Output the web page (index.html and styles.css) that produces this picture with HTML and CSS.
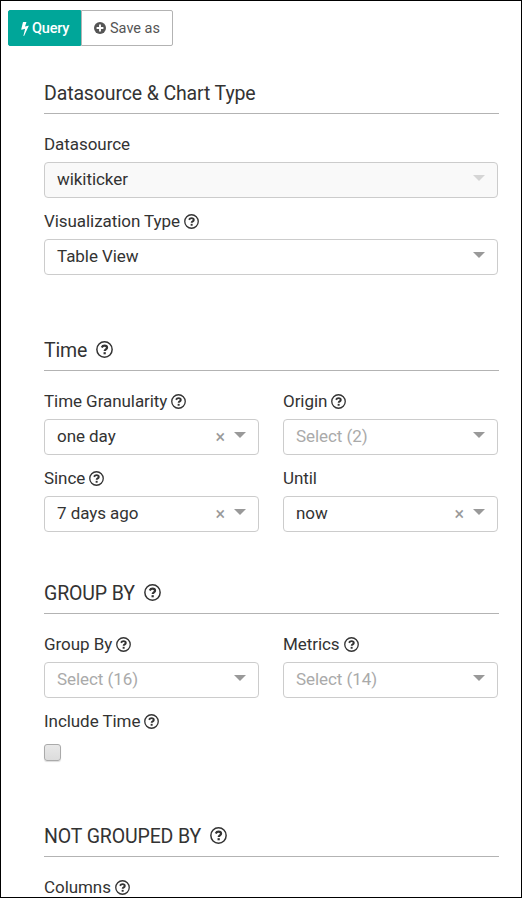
FILE: index.html
```
<!DOCTYPE html>
<html lang="en">
<head>
    <meta charset="UTF-8">
    <meta name="viewport" content="width=device-width, initial-scale=1.0">
    <title>Explore - wikiticker</title>
    <link rel="stylesheet" href="styles.css">
</head>
<body>
    <!-- Shared icon -->
    <svg class="defs" width="0" height="0">
        <symbol id="help" viewBox="0 0 16 16">
            <circle cx="8" cy="8" r="7.2" fill="none" stroke="currentColor" stroke-width="1.4"/>
            <path d="M5.4 6.1C6 4.9 6.9 4.4 8 4.4c1.4 0 2.4.7 2.4 1.9 0 1.6-2.2 1.5-2.2 3.1" fill="none" stroke="currentColor" stroke-width="2.1"/>
            <rect x="7.1" y="10.5" width="2.1" height="2" fill="currentColor"/>
        </symbol>
    </svg>

    <div class="panel">
        <div class="btn-group">
            <button class="btn btn-primary">
                <svg class="bolt" viewBox="448 0 896 1792"><path fill="currentColor" d="M1333 566q18 20 7 44l-540 1157q-13 25-42 25-4 0-14-2-17-5-25.5-19t-4.5-30l197-808-406 101q-4 1-12 1-18 0-31-11-18-15-13-39l201-825q4-14 16-23t28-9h328q19 0 32 12.5t13 29.5q0 8-5 18l-171 463 396-98q8-2 12-2 19 0 34 15z"/></svg>
                <span>Query</span>
            </button>
            <button class="btn btn-default">
                <svg class="plus" viewBox="0 0 12 12"><circle cx="6" cy="6" r="6" fill="currentColor"/><path d="M6 2.6v6.8M2.6 6h6.8" stroke="#fff" stroke-width="1.9"/></svg>
                <span>Save as</span>
            </button>
        </div>

        <section class="section section-source">
            <h2 class="legend">Datasource &amp; Chart Type</h2>
            <div class="field">
                <label class="label">Datasource</label>
                <div class="select disabled"><span class="value">wikiticker</span><i class="arrow"></i></div>
            </div>
            <div class="field">
                <label class="label">Visualization Type <svg class="help"><use href="#help"/></svg></label>
                <div class="select"><span class="value">Table View</span><i class="arrow"></i></div>
            </div>
        </section>

        <section class="section section-time">
            <h2 class="legend">Time <svg class="help"><use href="#help"/></svg></h2>
            <div class="row">
                <div class="field">
                    <label class="label">Time Granularity <svg class="help"><use href="#help"/></svg></label>
                    <div class="select"><span class="value">one day</span><span class="clear">×</span><i class="arrow"></i></div>
                </div>
                <div class="field">
                    <label class="label">Origin <svg class="help"><use href="#help"/></svg></label>
                    <div class="select"><span class="value placeholder">Select (2)</span><i class="arrow"></i></div>
                </div>
            </div>
            <div class="row">
                <div class="field">
                    <label class="label">Since <svg class="help"><use href="#help"/></svg></label>
                    <div class="select"><span class="value">7 days ago</span><span class="clear">×</span><i class="arrow"></i></div>
                </div>
                <div class="field">
                    <label class="label">Until</label>
                    <div class="select"><span class="value">now</span><span class="clear">×</span><i class="arrow"></i></div>
                </div>
            </div>
        </section>

        <section class="section section-group">
            <h2 class="legend">GROUP BY <svg class="help"><use href="#help"/></svg></h2>
            <div class="row">
                <div class="field">
                    <label class="label">Group By <svg class="help"><use href="#help"/></svg></label>
                    <div class="select"><span class="value placeholder">Select (16)</span><i class="arrow"></i></div>
                </div>
                <div class="field">
                    <label class="label">Metrics <svg class="help"><use href="#help"/></svg></label>
                    <div class="select"><span class="value placeholder">Select (14)</span><i class="arrow"></i></div>
                </div>
            </div>
            <div class="field">
                <label class="label" for="include-time">Include Time <svg class="help"><use href="#help"/></svg></label>
                <input type="checkbox" id="include-time" class="checkbox">
            </div>
        </section>

        <section class="section">
            <h2 class="legend">NOT GROUPED BY <svg class="help"><use href="#help"/></svg></h2>
            <div class="field">
                <label class="label">Columns <svg class="help"><use href="#help"/></svg></label>
            </div>
        </section>
    </div>
</body>
</html>
```
FILE: styles.css
```
* {
    box-sizing: border-box;
}

body {
    margin: 0;
    font-family: Roboto, "Liberation Sans", sans-serif;
    font-size: 17px;
    letter-spacing: -0.06px;
    color: #333;
    background: #fff;
}

.defs {
    display: block;
}

.panel {
    width: 522px;
    height: 898px;
    padding: 9px 22px 0 7px;
    border: 1px solid #000;
    overflow: hidden;
}

/* Buttons */
.btn-group {
    display: flex;
    height: 36px;
}

.btn {
    display: flex;
    align-items: center;
    padding: 0 12px;
    font-family: inherit;
    font-size: 14.5px;
    letter-spacing: 0;
    white-space: nowrap;
    border: 1px solid #b3b3b3;
}

.btn-primary {
    width: 73px;
    gap: 3px;
    color: #fff;
    background: #00a699;
    border-color: #00a699;
    border-radius: 2px 0 0 2px;
    font-weight: 500;
    letter-spacing: -0.2px;
}

.btn-default {
    width: 92px;
    gap: 4px;
    color: #555;
    background: #fff;
    border-radius: 0 2px 2px 0;
}

.bolt {
    width: 8px;
    height: 15px;
    flex: none;
}

.plus {
    width: 12px;
    height: 12px;
    flex: none;
}

/* Sections */
.section {
    margin-left: 36px;
}

.section-source {
    height: 257px;
    margin-top: 31px;
}

.section-time,
.section-group {
    height: 243px;
}

.legend {
    display: flex;
    align-items: center;
    gap: 9px;
    height: 37px;
    margin: 0 0 17px;
    padding-bottom: 4px;
    font-size: 19.5px;
    font-weight: 400;
    letter-spacing: -0.13px;
    border-bottom: 1px solid #b3b3b3;
}

.row {
    display: grid;
    grid-template-columns: 215px 215px;
    gap: 24px;
}

.field {
    height: 77px;
    width: 100%;
}

.section > .field {
    width: 454px;
}

.label {
    display: flex;
    align-items: center;
    gap: 4px;
    height: 27px;
    margin-bottom: 4px;
    padding-bottom: 1px;
}

.help {
    width: 15px;
    height: 15px;
    flex: none;
}

.legend .help {
    width: 17px;
    height: 17px;
    margin-bottom: 1px;
}

/* Select boxes */
.select {
    display: flex;
    align-items: center;
    height: 36px;
    padding: 0 12px 2px;
    border: 1px solid #ccc;
    border-radius: 4px;
    background: #fff;
}

.value {
    flex: 1;
}

.placeholder {
    color: #aaa;
}

.clear {
    margin-right: 9px;
    font-size: 18px;
    color: #999;
}

.arrow {
    border: 6px solid transparent;
    border-top-color: #999;
    border-bottom-width: 0;
    margin-bottom: 2px;
}

.disabled {
    background: #f9f9f9;
}

.disabled .arrow {
    border-top-color: #d5d5d5;
}

.checkbox {
    display: block;
    appearance: none;
    width: 17px;
    height: 17px;
    margin: 9px 0 0;
    border: 1px solid #aaa;
    border-radius: 3px;
    background: linear-gradient(#e8e8e8, #dcdcdc);
    box-shadow: 0 1px 1px #ddd;
}
```
